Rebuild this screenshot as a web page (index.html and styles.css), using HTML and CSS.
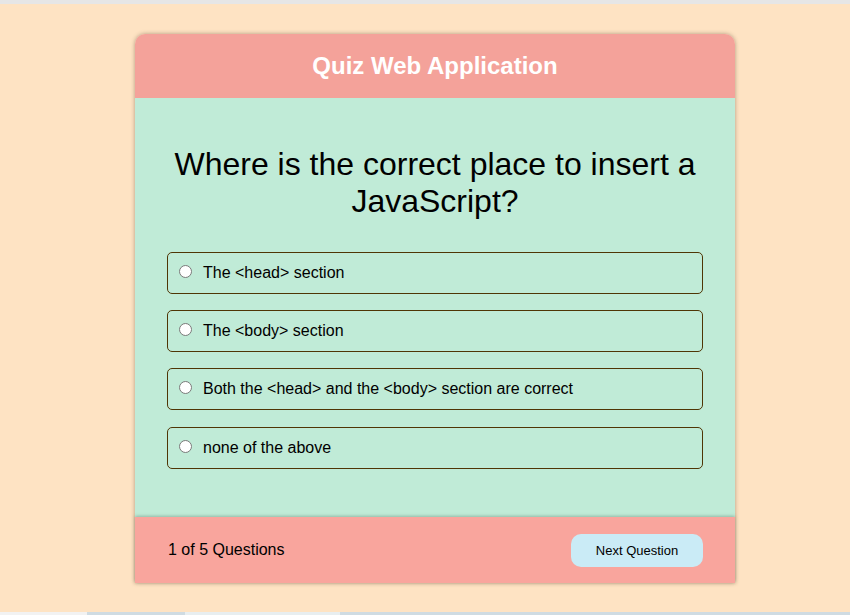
FILE: index.html
```html
<!DOCTYPE html>
<html lang="en">
<head>
<meta charset="utf-8">
<title>Quiz Web Application</title>
<link rel="stylesheet" href="styles.css">
</head>
<body>
<div class="topline"></div>
<main class="page">
  <div class="card">
    <header class="card-head">Quiz Web Application</header>
    <section class="card-body">
      <h2 class="question">Where is the correct place to insert a JavaScript?</h2>
      <ul class="options">
        <li class="option"><span class="radio"></span><span>The &lt;head&gt; section</span></li>
        <li class="option"><span class="radio"></span><span>The &lt;body&gt; section</span></li>
        <li class="option"><span class="radio"></span><span>Both the &lt;head&gt; and the &lt;body&gt; section are correct</span></li>
        <li class="option"><span class="radio"></span><span>none of the above</span></li>
      </ul>
    </section>
    <footer class="card-foot">
      <span class="count">1 of 5 Questions</span>
      <button class="next">Next Question</button>
    </footer>
  </div>
</main>
<div class="bottombar">
  <span class="seg seg-a"></span><span class="seg seg-b"></span><span class="seg seg-c"></span><span class="seg seg-d"></span>
</div>
</body>
</html>
```

FILE: styles.css
```css
* { box-sizing: border-box; }
html, body { margin: 0; padding: 0; }
body {
  background: #fee3c3;
  font-family: "Liberation Sans", Arial, sans-serif;
  color: #000;
  height: 615px;
  overflow: hidden;
  display: flex;
  flex-direction: column;
}
.topline { height: 4px; background: #e6e6e6; flex: none; }
.page {
  flex: 1;
  display: flex;
  justify-content: center;
  padding-top: 30px;
  padding-left: 20px;
}
.card {
  width: 600px;
  height: 549px;
  border-radius: 10px 10px 0 0;
  box-shadow: 0 0 4px rgba(80, 60, 40, 0.45);
  display: flex;
  flex-direction: column;
}
.card-head {
  height: 64px;
  background: #f4a29a;
  border-radius: 10px 10px 0 0;
  color: #fff;
  font-weight: bold;
  font-size: 24px;
  display: flex;
  align-items: center;
  justify-content: center;
}
.card-body {
  flex: 1;
  background: #c0ebd7;
  padding: 0 32px;
}
.question {
  margin: 48px 0 32px;
  font-size: 32px;
  font-weight: normal;
  line-height: 37px;
  text-align: center;
}
.options {
  list-style: none;
  margin: 0;
  padding: 0;
  display: flex;
  flex-direction: column;
  gap: 16px;
}
.options .option:nth-child(4) { margin-top: 1px; }
.option {
  height: 42px;
  border: 1px solid #4f3505;
  border-radius: 5px;
  display: flex;
  align-items: center;
  padding-left: 11px;
  font-size: 16px;
}
.radio {
  width: 13px;
  height: 13px;
  border-radius: 50%;
  border: 1px solid #7a7a7a;
  background: #fff;
  margin-right: 11px;
  margin-top: -3px;
  flex: none;
}
.card-foot {
  height: 66px;
  background: #f9a59d;
  box-shadow: 0 -1px 3px rgba(60, 90, 70, 0.35);
  display: flex;
  align-items: center;
  justify-content: space-between;
  padding: 0 32px 0 33px;
  position: relative;
}
.count { font-size: 16px; }
.next {
  width: 132px;
  height: 33px;
  border: none;
  border-radius: 10px;
  background: #caebf6;
  font-family: "Liberation Sans", Arial, sans-serif;
  font-size: 13px;
  color: #000;
}
.bottombar {
  height: 3px;
  flex: none;
  display: flex;
  background: #cfdbe2;
}
.seg { height: 100%; }
.seg-a { width: 87px; background: #f2f2f2; }
.seg-b { width: 98px; background: #cfdbe2; }
.seg-c { width: 155px; background: #e8eef0; }
.seg-d { flex: 1; background: #cfdbe2; }
```
